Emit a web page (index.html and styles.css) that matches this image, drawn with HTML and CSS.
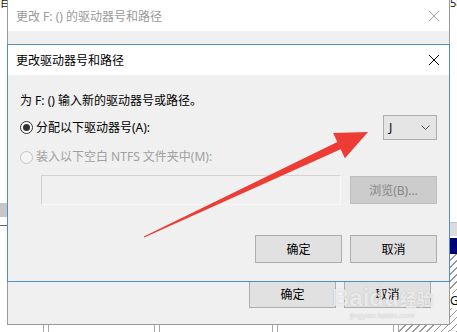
FILE: index.html
```html
<!DOCTYPE html>
<html lang="zh-CN">
<head>
    <meta charset="UTF-8">
    <meta name="viewport" content="width=device-width, initial-scale=1.0">
    <title>更改驱动器号和路径</title>
    <link rel="stylesheet" href="styles.css">
</head>
<body>
<div class="screen">

    <!-- Hintergrund links -->
    <div class="edge edge-left">
        <div class="edge-top">目</div>
        <div class="edge-grey"></div>
        <div class="edge-line"></div>
    </div>

    <div class="middle">
        <!-- hinteres Fenster -->
        <div class="window back">
            <div class="titlebar">
                <span class="title">更改 F: () 的驱动器号和路径</span>
                <svg class="close" width="12" height="12" viewBox="0 0 12 12"><path d="M1 1 L11 11 M11 1 L1 11"/></svg>
            </div>
            <div class="back-body">
                <div class="actions back-actions">
                    <button class="btn">确定</button>
                    <button class="btn">取消</button>
                </div>
            </div>
        </div>
        <div class="under">
            <div class="u-gap" style="width:36px"></div>
            <div class="u-rule"></div>
            <div class="u-gap" style="width:105px"></div>
            <div class="u-rule"></div>
            <div class="u-gap" style="width:112px"></div>
            <div class="u-rule"></div>
            <div class="u-gap" style="width:115px"></div>
            <div class="u-rule"></div>
            <div class="u-hatch"></div>
        </div>
    </div>

    <!-- Hintergrund rechts -->
    <div class="edge edge-right">
        <div class="edge-top">58</div>
        <div class="edge-grey r"></div>
        <div class="edge-navy"></div>
        <div class="edge-hatch">
            <span class="edge-text">GE</span>
        </div>
    </div>

    <!-- vorderes Fenster -->
    <div class="window front">
        <div class="titlebar">
            <span class="title">更改驱动器号和路径</span>
            <svg class="close" width="12" height="12" viewBox="0 0 12 12"><path d="M1 1 L11 11 M11 1 L1 11"/></svg>
        </div>
        <div class="front-body">
            <p class="intro">为 F: () 输入新的驱动器号或路径。</p>

            <div class="row">
                <label class="radio"><span class="dot checked"></span>分配以下驱动器号(A):</label>
                <div class="select">
                    <span>J</span>
                    <svg width="9" height="5" viewBox="0 0 9 5"><path d="M0.5 0.5 L4.5 4.5 L8.5 0.5"/></svg>
                </div>
            </div>

            <label class="radio disabled"><span class="dot"></span>装入以下空白 NTFS 文件夹中(M):</label>

            <div class="folder-row">
                <div class="field"></div>
                <button class="btn browse" disabled>浏览(B)...</button>
            </div>

            <div class="actions">
                <button class="btn">确定</button>
                <button class="btn">取消</button>
            </div>
        </div>
    </div>

    <!-- roter Pfeil -->
    <svg class="arrow" width="457" height="332" viewBox="0 0 457 332">
        <polygon points="143.8,236.6 337.3,142.0 333.1,132.9 368,132 344.9,158.3 340.7,149.2 144.2,237.4"/>
    </svg>

    <div class="watermark">
        <span class="wm-big">Bai</span><span class="wm-big">du</span><span class="wm-cn">经验</span>
        <div class="wm-url">jingyan.baidu.com</div>
    </div>
</div>
</body>
</html>
```

FILE: styles.css
```css
body {
    margin: 0;
    padding: 0;
    background-color: white;
    font-family: "Noto Sans", "Noto Sans CJK SC", sans-serif;
    font-size: 12px;
}

.screen {
    position: relative;
    width: 457px;
    height: 332px;
    overflow: hidden;
    display: flex;
}

/* Raender */
.edge {
    width: 7px;
    display: flex;
    flex-direction: column;
    overflow: hidden;
}

.edge-top {
    height: 8px;
    line-height: 6px;
    font-size: 11px;
    color: #111;
    white-space: nowrap;
}

.edge-grey {
    margin-top: 195px;
    height: 14px;
    background-color: #c6c6c6;
}

.edge-line {
    margin-top: 8px;
    height: 1px;
    background-color: #666;
}

.edge-right {
    width: 7px;
}

.edge-grey.r {
    margin-top: 214px;
    height: 13px;
    background-color: #dcdcdc;
    border-top: 1px solid #c4c4c4;
}

.edge-navy {
    margin-top: 2px;
    height: 16px;
    background-color: #00007a;
}

.edge-hatch {
    flex: 1;
    background: repeating-linear-gradient(135deg, white 0 4px, #9a9a9a 4px 5px);
    padding-top: 40px;
}

.edge-text {
    display: block;
    background-color: white;
    font-size: 12px;
    line-height: 14px;
    color: #111;
    white-space: nowrap;
}

.middle {
    width: 443px;
    display: flex;
    flex-direction: column;
}

/* Fenster */
.window {
    box-sizing: border-box;
    background-color: #f0f0f0;
}

.back {
    height: 325px;
    border: 1px solid #999;
    border-top: none;
    display: flex;
    flex-direction: column;
}

.titlebar {
    display: flex;
    align-items: center;
    justify-content: space-between;
    background-color: white;
    padding: 0 9px 0 8px;
}

.back .titlebar {
    height: 31px;
}

.back .title {
    color: #9a9a9a;
}

.close {
    fill: none;
    stroke: #000;
    stroke-width: 1;
}

.back .close {
    stroke: #a0a0a0;
}

.back-body {
    flex: 1;
    background-color: #f0f0f0;
    display: flex;
    flex-direction: column;
    justify-content: flex-end;
    padding: 0 18px 16px 0;
}

.back-actions {
    gap: 16px;
}

.under {
    height: 7px;
    display: flex;
}

.u-gap {
    height: 100%;
}

.u-rule {
    width: 6px;
    box-sizing: border-box;
    border-left: 1px solid #a8a8a8;
    border-right: 1px solid #a8a8a8;
}

.u-hatch {
    flex: 1;
    background: repeating-linear-gradient(135deg, white 0 4px, #9a9a9a 4px 5px);
}

.front {
    position: absolute;
    left: 7px;
    top: 44px;
    width: 443px;
    height: 238px;
    border: 1px solid #4d8fc4;
    display: flex;
    flex-direction: column;
}

.front .titlebar {
    height: 30px;
}

.front-body {
    flex: 1;
    padding: 18px 12px 0 12px;
    display: flex;
    flex-direction: column;
}

.intro {
    margin: 0;
    line-height: 16px;
    color: #000;
}

.row {
    margin-top: 6px;
    display: flex;
    align-items: center;
    justify-content: space-between;
}

.radio {
    display: flex;
    align-items: center;
    gap: 3px;
    line-height: 16px;
    color: #000;
}

.radio.disabled {
    margin-top: 9px;
    color: #a0a0a0;
}

.dot {
    width: 13px;
    height: 13px;
    box-sizing: border-box;
    border: 1px solid #333;
    border-radius: 50%;
    background-color: white;
    display: flex;
    align-items: center;
    justify-content: center;
}

.dot.checked::after {
    content: "";
    width: 7px;
    height: 7px;
    border-radius: 50%;
    background-color: #333;
}

.radio.disabled .dot {
    border-color: #c4c4c4;
    background-color: #f4f4f4;
}

.select {
    width: 54px;
    height: 25px;
    box-sizing: border-box;
    border: 1px solid #adadad;
    background-color: #e5e5e5;
    display: flex;
    align-items: center;
    justify-content: space-between;
    padding: 0 6px 0 5px;
}

.select svg {
    fill: none;
    stroke: #555;
    stroke-width: 1;
}

.folder-row {
    margin-top: 10px;
    display: flex;
    align-items: center;
    justify-content: space-between;
    padding-left: 21px;
}

.field {
    width: 300px;
    height: 30px;
    box-sizing: border-box;
    border: 1px solid #d2d2d2;
    border-right-color: #f8f8f8;
    border-bottom-color: #f8f8f8;
    background-color: #f0f0f0;
}

.btn {
    width: 87px;
    height: 28px;
    box-sizing: border-box;
    border: 1px solid #adadad;
    background-color: #e1e1e1;
    font-family: "Noto Sans", "Noto Sans CJK SC", sans-serif;
    font-size: 12px;
    color: #000;
    padding: 0;
}

.btn.browse {
    background-color: #cccccc;
    border-color: #bfbfbf;
    color: #858585;
}

.actions {
    margin-top: 30px;
    display: flex;
    justify-content: flex-end;
    gap: 8px;
}

/* Markierung */
.arrow {
    position: absolute;
    left: 0;
    top: 0;
    fill: #ec3c33;
}

.watermark {
    position: absolute;
    left: 332px;
    top: 284px;
    color: rgba(255, 255, 255, 0.75);
    text-shadow: 0 0 1px rgba(0, 0, 0, 0.25);
    white-space: nowrap;
}

.wm-big {
    font-family: "Liberation Sans", sans-serif;
    font-size: 24px;
    font-weight: bold;
    line-height: 28px;
}

.wm-cn {
    font-size: 17px;
    font-weight: bold;
    margin-left: 1px;
}

.wm-url {
    font-family: "Liberation Sans", sans-serif;
    font-size: 8px;
    line-height: 8px;
    margin-left: 18px;
    color: rgba(255, 255, 255, 0.6);
}
```
